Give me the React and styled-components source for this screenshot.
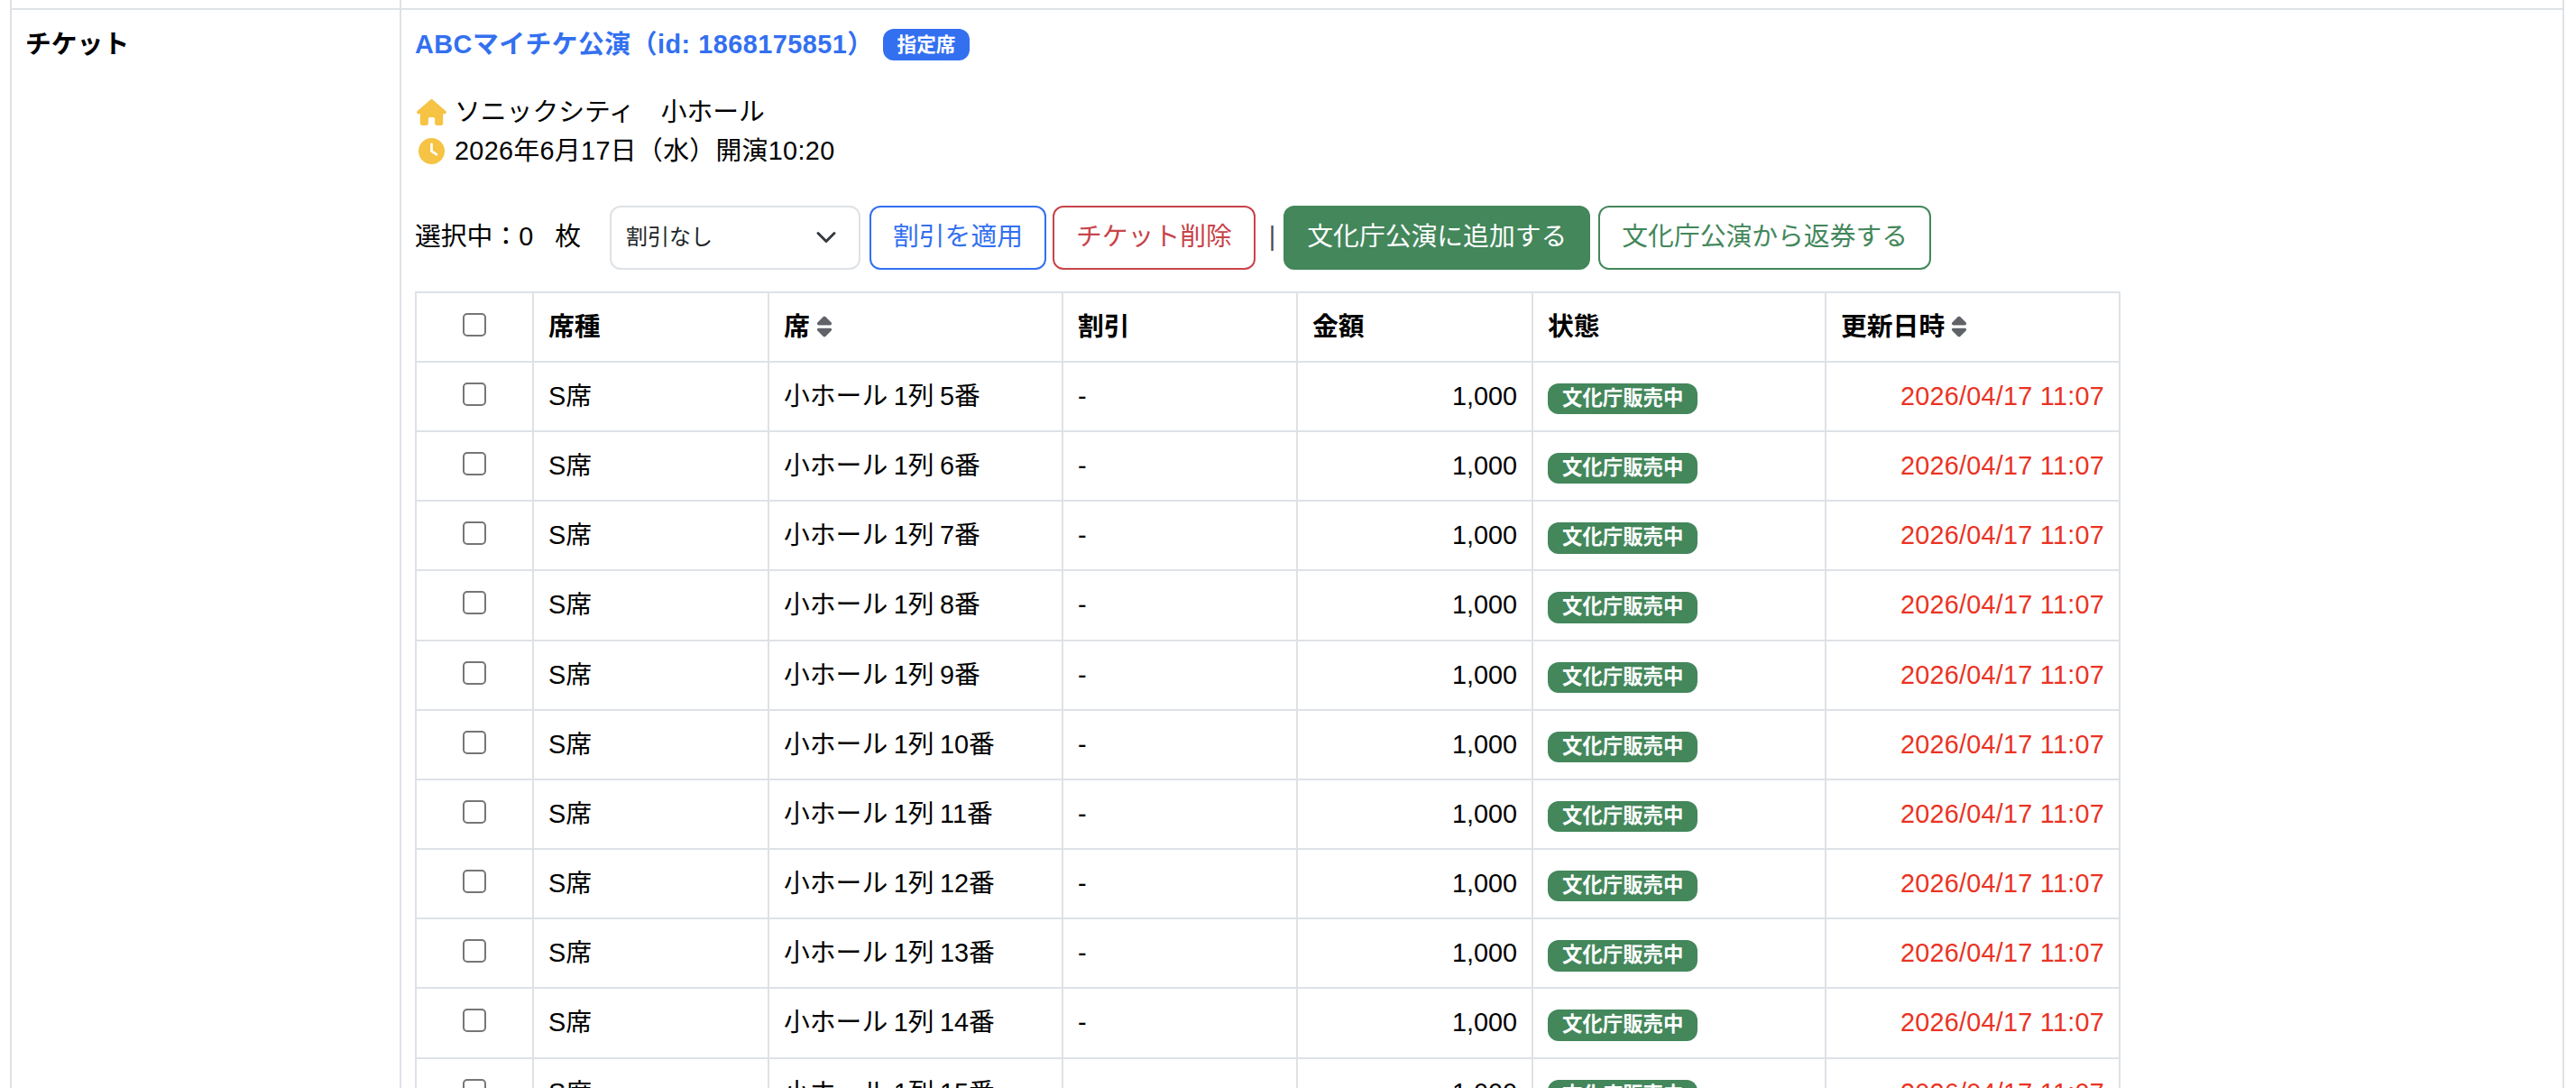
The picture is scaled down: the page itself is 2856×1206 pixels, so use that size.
import styled, { createGlobalStyle } from 'styled-components';
import { FaClock, FaHouse, FaSort } from 'react-icons/fa6';

const seats = [5, 6, 7, 8, 9, 10, 11, 12, 13, 14, 15];

const GlobalStyle = createGlobalStyle`
	html, body {
		margin: 0;
		height: 1206px;
		overflow: hidden;
		background: #fff;
	}
	body {
		font-family: "Liberation Sans", "Noto Sans CJK JP", sans-serif;
		font-size: 28.8px;
		line-height: 1.5;
		color: #000;
	}
`;

const Page = styled.div`
	padding: 0 13px 0 11px;
`;

const DetailTable = styled.table`
	width: 100%;
	table-layout: fixed;
	border-collapse: collapse;
	border-left: 2px solid #dee2e6;
	border-right: 2px solid #dee2e6;
`;

const StubCell = styled.td`
	height: 9px;
	padding: 0;
	border-right: 2px solid #dee2e6;
	border-bottom: 2px solid #dee2e6;
`;

const DetailLabel = styled.th`
	width: 430px;
	padding: 17px 15px;
	text-align: left;
	vertical-align: top;
	font-weight: 700;
	border-right: 2px solid #dee2e6;
`;

const DetailValue = styled.td`
	padding: 17px 15px;
	vertical-align: top;
`;

const Title = styled.div`
	display: flex;
	align-items: center;
	gap: 10px;
	margin-bottom: 32px;
`;

const TitleLink = styled.a`
	color: #3370f0;
	font-weight: 700;
	letter-spacing: 0.5px;
	text-decoration: none;
`;

const Badge = styled.span`
	display: inline-block;
	padding: ${(p) => (p.$wide ? '6px 16px' : '7px 16px')};
	font-size: ${(p) => (p.$wide ? '22.4px' : '21.6px')};
	font-weight: 700;
	line-height: 1;
	color: #fff;
	white-space: nowrap;
	border-radius: 12px;
	background: ${(p) => p.$color};
`;

const InfoLine = styled.div`
	display: flex;
	align-items: center;
	gap: 8px;
`;

const InfoText = styled.span`
	letter-spacing: ${(p) => (p.$digits ? '0.35px' : '0')};
`;

const InfoIcon = styled.span`
	display: flex;
	justify-content: center;
	align-items: center;
	width: 36px;
	color: #f6c344;
`;

const HouseIcon = styled(FaHouse)`
	width: 33px;
	height: 29px;
`;

const ClockIcon = styled(FaClock)`
	width: 29px;
	height: 29px;
`;

const Toolbar = styled.div`
	display: flex;
	align-items: center;
	margin: 38px 0 24px;
`;

const SelectedCount = styled.span`
	margin-right: 32px;
	white-space: nowrap;
`;

const CountUnit = styled.span`
	margin-left: 24px;
`;

const SelectWrap = styled.div`
	position: relative;
	width: 278px;
	height: 71px;
	margin-right: 10px;
`;

const Select = styled.select`
	appearance: none;
	width: 100%;
	height: 100%;
	padding: 0 56px 0 16px;
	font: inherit;
	font-size: 24px;
	color: #212529;
	background: #fff;
	border: 2px solid #dee2e6;
	border-radius: 12px;
`;

const Chevron = styled.svg`
	position: absolute;
	top: 23px;
	right: 26px;
	width: 24px;
	height: 24px;
	pointer-events: none;
`;

const Button = styled.button`
	height: 71px;
	margin-right: ${(p) => p.$gap || 9}px;
	padding: 0 24px;
	font: inherit;
	white-space: nowrap;
	color: ${(p) => (p.$solid ? '#fff' : p.$color)};
	background: ${(p) => (p.$solid ? p.$color : '#fff')};
	border: 2px solid ${(p) => p.$color};
	border-radius: 12px;
`;

const Divider = styled.span`
	margin: 0 9px 0 6px;
	color: #495057;
`;

const SeatTable = styled.table`
	width: 1889px;
	table-layout: fixed;
	border-collapse: collapse;
`;

const Col = styled.col`
	width: ${(p) => p.$w}px;
`;

const Head = styled.th`
	padding: 16px;
	font-weight: 700;
	text-align: left;
	border: 2px solid #dee2e6;
`;

const Cell = styled.td`
	padding: 16px;
	text-align: ${(p) => p.$align || 'left'};
	color: ${(p) => p.$color || '#000'};
	letter-spacing: ${(p) => p.$spacing || '0'};
	border: 2px solid #dee2e6;
`;

const SeatCell = styled(Cell)`
	word-spacing: -1.5px;
`;

const CheckCell = styled(Cell)`
	text-align: center;
`;

const CheckHead = styled(Head)`
	text-align: center;
`;

const Check = styled.input.attrs({ type: 'checkbox' })`
	appearance: none;
	display: inline-block;
	width: 26px;
	height: 26px;
	margin: 6px 0 0;
	vertical-align: top;
	background: #fff;
	border: 2px solid #767676;
	border-radius: 5px;
`;

const SortIcon = styled(FaSort)`
	margin-left: 7px;
	width: 18px;
	height: 26px;
	vertical-align: -3px;
	color: #5f6368;
`;

function App() {
	return (
		<Page>
			<GlobalStyle />
			<DetailTable>
				<tbody>
					<tr>
						<StubCell style={{ width: 430 }} />
						<StubCell />
					</tr>
					<tr>
						<DetailLabel>チケット</DetailLabel>
						<DetailValue>
							<Title>
								<TitleLink href="#">ABCマイチケ公演（id: 1868175851）</TitleLink>
								<Badge $color="#3370f0">指定席</Badge>
							</Title>
							<InfoLine>
								<InfoIcon>
									<HouseIcon />
								</InfoIcon>
								<InfoText>ソニックシティ　小ホール</InfoText>
							</InfoLine>
							<InfoLine>
								<InfoIcon>
									<ClockIcon />
								</InfoIcon>
								<InfoText $digits>2026年6月17日（水）開演10:20</InfoText>
							</InfoLine>
							<Toolbar>
								<SelectedCount>
									選択中：0<CountUnit>枚</CountUnit>
								</SelectedCount>
								<SelectWrap>
									<Select defaultValue="none">
										<option value="none">割引なし</option>
									</Select>
									<Chevron viewBox="0 0 16 16">
										<path
											d="m2 5 6 6 6-6"
											fill="none"
											stroke="#343a40"
											strokeWidth="2"
											strokeLinecap="round"
											strokeLinejoin="round"
										/>
									</Chevron>
								</SelectWrap>
								<Button $color="#3370f0" $gap={7}>
									割引を適用
								</Button>
								<Button $color="#c8444a">チケット削除</Button>
								<Divider>|</Divider>
								<Button $color="#43875b" $solid>
									文化庁公演に追加する
								</Button>
								<Button $color="#43875b">文化庁公演から返券する</Button>
							</Toolbar>
							<SeatTable>
								<colgroup>
									<Col $w={130} />
									<Col $w={261} />
									<Col $w={326} />
									<Col $w={260} />
									<Col $w={261} />
									<Col $w={325} />
									<Col $w={326} />
								</colgroup>
								<thead>
									<tr>
										<CheckHead>
											<Check />
										</CheckHead>
										<Head>席種</Head>
										<Head>
											席
											<SortIcon />
										</Head>
										<Head>割引</Head>
										<Head>金額</Head>
										<Head>状態</Head>
										<Head>
											更新日時
											<SortIcon />
										</Head>
									</tr>
								</thead>
								<tbody>
									{seats.map((seat) => (
										<tr key={seat}>
											<CheckCell>
												<Check />
											</CheckCell>
											<Cell>S席</Cell>
											<SeatCell>小ホール 1列 {seat}番</SeatCell>
											<Cell>-</Cell>
											<Cell $align="right">1,000</Cell>
											<Cell>
												<Badge $color="#43875b" $wide>
													文化庁販売中
												</Badge>
											</Cell>
											<Cell $align="right" $color="#ea3323" $spacing="0.25px">
												2026/04/17 11:07
											</Cell>
										</tr>
									))}
								</tbody>
							</SeatTable>
						</DetailValue>
					</tr>
				</tbody>
			</DetailTable>
		</Page>
	);
}

export default App;
